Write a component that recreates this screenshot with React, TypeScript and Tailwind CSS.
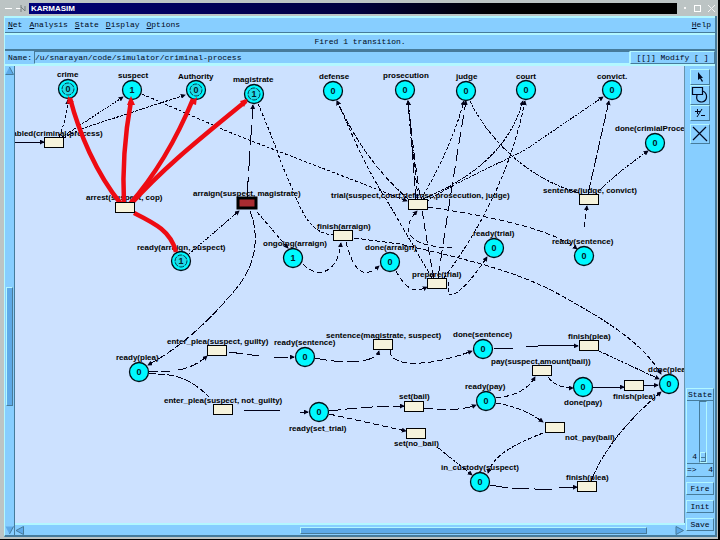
import { useState, type ReactNode } from "react";

type Place = { x: number; y: number; tokens: number; ring?: boolean };
type Edge = { d: string; dash?: string; arrow?: boolean };

const places: Place[] = [
  { x: 68, y: 89, tokens: 0, ring: true },
  { x: 132, y: 90, tokens: 1 },
  { x: 196, y: 90, tokens: 0, ring: true },
  { x: 254, y: 94, tokens: 1, ring: true },
  { x: 333, y: 91, tokens: 0 },
  { x: 405, y: 90, tokens: 0 },
  { x: 466, y: 91, tokens: 0 },
  { x: 526, y: 90, tokens: 0 },
  { x: 612, y: 90, tokens: 0 },
  { x: 655, y: 143, tokens: 0 },
  { x: 494, y: 248, tokens: 0 },
  { x: 584, y: 256, tokens: 0 },
  { x: 293, y: 258, tokens: 1 },
  { x: 390, y: 262, tokens: 0 },
  { x: 181, y: 261, tokens: 1, ring: true },
  { x: 139, y: 372, tokens: 0 },
  { x: 305, y: 357, tokens: 0 },
  { x: 483, y: 349, tokens: 0 },
  { x: 486, y: 401, tokens: 0 },
  { x: 583, y: 387, tokens: 0 },
  { x: 669, y: 384, tokens: 0 },
  { x: 319, y: 412, tokens: 0 },
  { x: 480, y: 482, tokens: 0 },
];

// top left corner of each transition box
const transitions: [number, number][] = [
  [44, 137],
  [115, 202],
  [408, 199],
  [333, 230],
  [427, 278],
  [579, 194],
  [207, 345],
  [213, 404],
  [373, 339],
  [404, 401],
  [406, 428],
  [579, 340],
  [532, 365],
  [624, 380],
  [545, 422],
  [577, 481],
];

const labels: [number, number, string][] = [
  [57, 77, "crime"],
  [118, 78, "suspect"],
  [178, 79, "Authority"],
  [233, 82, "magistrate"],
  [319, 79, "defense"],
  [383, 78, "prosecution"],
  [456, 79, "judge"],
  [516, 79, "court"],
  [597, 79, "convict."],
  [615, 131, "done(crimialProcess)"],
  [3, 136, "enabled(criminal-process)"],
  [86, 200, "arrest(suspect, cop)"],
  [193, 196, "arraign(suspect, magistrate)"],
  [331, 198, "trial(suspect,court,defense,prosecution, judge)"],
  [543, 193, "sentence(judge, convict)"],
  [473, 236, "ready(trial)"],
  [552, 244, "ready(sentence)"],
  [317, 229, "finish(arraign)"],
  [263, 246, "ongoing(arraign)"],
  [365, 250, "done(arraign)"],
  [137, 250, "ready(arraign, suspect)"],
  [412, 277, "prepare(trial)"],
  [167, 344, "enter_plea(suspect, guilty)"],
  [274, 345, "ready(sentence)"],
  [326, 338, "sentence(magistrate, suspect)"],
  [453, 337, "done(sentence)"],
  [568, 339, "finish(plea)"],
  [491, 364, "pay(suspect,amount(bail))"],
  [648, 372, "done(plea)"],
  [116, 360, "ready(plea)"],
  [164, 403, "enter_plea(suspect, not_guilty)"],
  [289, 431, "ready(set_trial)"],
  [399, 399, "set(bail)"],
  [394, 446, "set(no_bail)"],
  [465, 389, "ready(pay)"],
  [564, 405, "done(pay)"],
  [613, 399, "finish(plea)"],
  [565, 440, "not_pay(bail)"],
  [566, 480, "finish(plea)"],
  [441, 470, "in_custody(suspect)"],
];

const edges: Edge[] = [
  { d: "M15 142H44", dash: "none" },
  { d: "M59 137Q67 118 68 100", dash: "3 2" },
  { d: "M62 137L123 97", dash: "2 1" },
  { d: "M64 138Q75 131 90 126L185 95", dash: "3 1" },
  { d: "M142 94L236 135Q330 171 407 201", dash: "3 2" },
  { d: "M247 197L253 105", dash: "20 6" },
  { d: "M258 104Q271 133 282 165C299 202 305 233 333 235", dash: "3 2", arrow: false },
  { d: "M409 200C372 167 353 135 337 101", dash: "5 2" },
  { d: "M416 199L408 101", dash: "10 3" },
  { d: "M418 199L408 101", dash: "5 3" },
  { d: "M421 199Q451 149 464 101", dash: "3 2" },
  { d: "M423 199C474 177 509 149 523 101", dash: "3 1" },
  { d: "M427 201C460 179 508 160 528 148L603 97", dash: "2 1" },
  { d: "M432 278L389 204C361 160 353 135 337 101", dash: "4 2" },
  { d: "M434 278Q419 204 408 101", dash: "8 4" },
  { d: "M438 278Q451 190 466 101", dash: "12 5" },
  { d: "M444 278C475 236 510 177 525 101", dash: "4 2" },
  { d: "M470 101C491 144 532 180 579 193", dash: "3 1", arrow: false },
  { d: "M588 194L609 101", dash: "12 2" },
  { d: "M596 194Q615 174 648 151", dash: "2 1" },
  { d: "M428 207C495 217 553 230 577 249", dash: "5 3" },
  { d: "M584 227L587 206", dash: "5 3" },
  { d: "M189 254L239 211", dash: "2 1" },
  { d: "M257 212L288 248", dash: "4 2" },
  { d: "M250 211C260 237 256 266 235 290C205 326 176 350 148 365", dash: "8 2" },
  { d: "M303 264C316 278 337 276 341 243", dash: "5 3" },
  { d: "M346 242C354 273 364 279 379 266", dash: "5 3" },
  { d: "M396 271C405 287 412 294 427 287", dash: "5 3" },
  { d: "M452 248C404 246 401 229 417 211", dash: "5 3" },
  { d: "M448 282V293C453 302 475 276 487 257", dash: "4 2" },
  { d: "M354 238L400 244C451 256 520 270 567 299C615 325 645 347 661 374", dash: "5 2" },
  { d: "M149 371H170M178 370Q195 367 207 356", dash: "9 3" },
  { d: "M149 374C178 373 193 381 209 397", dash: "7 2", arrow: false },
  { d: "M229 352L259 356M274 357H294", dash: "14 4" },
  { d: "M315 358C337 363 375 365 379 351", dash: "12 4" },
  { d: "M390 350C389 368 430 367 472 351", dash: "6 3" },
  { d: "M494 348H513M526 347L551 345L578 346", dash: "none" },
  { d: "M599 351L659 379", dash: "3 1" },
  { d: "M243 410L280 411M300 412H308", dash: "none" },
  { d: "M329 411Q370 406 404 406", dash: "12 4" },
  { d: "M329 414L406 431", dash: "6 3" },
  { d: "M424 408C440 410 461 411 476 405", dash: "9 4" },
  { d: "M437 447L472 475", dash: "3 1" },
  { d: "M496 398Q525 395 535 377", dash: "5 3" },
  { d: "M496 403Q522 407 543 422", dash: "5 2" },
  { d: "M548 377Q556 388 573 388", dash: "5 2" },
  { d: "M593 387H624", dash: "none" },
  { d: "M644 386L658 385", dash: "none" },
  { d: "M543 433C520 442 493 454 488 473", dash: "4 2" },
  { d: "M490 485Q509 489 535 489H554M559 488L577 487", dash: "18 4" },
  { d: "M591 481C607 441 640 410 661 392", dash: "5 1" },
];

const firedArcs = [
  "M70 98C79 133 96 173 121 204",
  "M131 101C125 134 122 166 124 205",
  "M193 99C177 138 158 172 129 205",
  "M246 101C206 134 166 165 130 205",
  "M134 213C154 223 171 231 176 252",
];

const raised = "border border-t-[#b3f7ff] border-l-[#b3f7ff] border-b-[#467b9b] border-r-[#467b9b]";
const sunken = "border border-t-[#467b9b] border-l-[#467b9b] border-b-[#b3f7ff] border-r-[#b3f7ff]";

const menus = ["Net", "Analysis", "State", "Display", "Options"];

function NetDiagram() {
  return (
    <svg className="block h-full w-full" role="img" aria-label="Criminal process net">
      <defs>
        <marker id="arrow" viewBox="0 0 6 6" refX="5" refY="3" markerWidth="5" markerHeight="5" orient="auto">
          <path d="M0 0L6 3L0 6Z" fill="#000018" />
        </marker>
      </defs>
      {/* coordinates below are window coordinates, the canvas starts at 15,66 */}
      <g transform="translate(-15 -66)">
        <g className="fill-black font-['Liberation_Sans',sans-serif] text-[8px] font-bold">
          {labels.map(([x, y, text]) => (
            <text key={`${x}-${y}`} x={x} y={y}>
              {text}
            </text>
          ))}
        </g>
        <g fill="none" stroke="#000018" strokeWidth="1" shapeRendering="crispEdges">
          {edges.map((e) => (
            <path
              key={e.d}
              d={e.d}
              strokeDasharray={e.dash}
              markerEnd={e.arrow === false ? undefined : "url(#arrow)"}
            />
          ))}
        </g>
        {places.map((p) => (
          <g key={`${p.x}-${p.y}`}>
            <circle cx={p.x} cy={p.y} r="9.5" fill="#00f8ff" stroke="#001018" strokeWidth="1.3" />
            {p.ring && (
              <circle cx={p.x} cy={p.y} r="6" fill="#20dbe8" stroke="#003848" strokeDasharray="5 1" />
            )}
            <text
              x={p.x}
              y={p.y + 3}
              textAnchor="middle"
              className="fill-[#00202c] font-['Liberation_Sans',sans-serif] text-[9px] font-bold"
            >
              {p.tokens}
            </text>
          </g>
        ))}
        <g fill="none" stroke="#ee0b12" strokeWidth="4.5">
          {firedArcs.map((d) => (
            <path key={d} d={d} />
          ))}
        </g>
        <path d="M131 96L127 105H135ZM68 96L67 104L74 102ZM197 97L190 103L196 105ZM248 99L240 101L244 107Z" fill="#ee0b12" />
        {transitions.map(([x, y]) => (
          <rect
            key={`${x}-${y}`}
            x={x + 0.5}
            y={y + 0.5}
            width="19"
            height="10"
            fill="#f6f3dc"
            stroke="#000"
          />
        ))}
        {/* the transition that is ready to fire */}
        <rect x="238" y="198" width="18" height="10" fill="#a92c31" stroke="#000" strokeWidth="3" />
      </g>
    </svg>
  );
}

function ToolButton({ label, className, children }: { label: string; className: string; children: ReactNode }) {
  return (
    <button aria-label={label} className={`${raised} flex w-5 items-center justify-center ${className}`}>
      {children}
    </button>
  );
}

export default function App() {
  const [file, setFile] = useState("/u/snarayan/code/simulator/criminal-process");
  const [state, setState] = useState(4);

  return (
    <div className="flex h-screen flex-col overflow-hidden border-r-2 border-b border-black bg-[#bcc4c4] pt-[3px] font-['Liberation_Mono',monospace] text-[8px] leading-none text-[#000820]">
      {/* Title bar */}
      <header className="flex h-[11px] shrink-0 items-center pl-1">
        <svg width="25" height="11" fill="none" stroke="#fff">
          <path d="M1 5.5H8M12 5.5H17" />
          <path d="M17 2V9M17 4L21 8V3" stroke="#777f7f" />
        </svg>
        <h1 className="flex h-full flex-1 items-center bg-linear-to-r from-[#000078] via-[#000040] via-50% to-black to-80% pl-0.5 font-['Liberation_Sans',sans-serif] text-[8px] font-bold text-white">
          KARMASIM
        </h1>
        <svg width="41" height="11" fill="none" stroke="#f4f4f4">
          <path d="M7 5H9" strokeWidth="2" />
          <rect x="17.5" y="2.5" width="6" height="6" stroke="#fff" />
          <path d="M31 2L38 9M38 2L31 9" />
        </svg>
      </header>

      <div className="mr-px mt-0.5 mb-0.5 ml-1 flex min-h-0 flex-1 flex-col border-r-2 border-b-2 border-l border-r-[#467b9b] border-b-[#467b9b] border-l-[#b3f7ff] bg-[#87ceff]">
        {/* Menu bar */}
        <nav className="flex h-[17px] shrink-0 items-center gap-[7px] border-t-2 border-b border-t-[#b3f7ff] border-b-[#467b9b] pr-1 pl-[3px]">
          {menus.map((m) => (
            <button key={m}>
              <span className="underline">{m[0]}</span>
              {m.slice(1)}
            </button>
          ))}
          <button className="ml-auto">
            <span className="underline">H</span>elp
          </button>
        </nav>

        <p className="flex h-[17px] shrink-0 items-center justify-center border-t-2 border-b border-t-[#b3f7ff] border-b-[#467b9b]">
          Fired 1 transition.
        </p>

        {/* File name row */}
        <div className="flex h-4 shrink-0 items-center border-t border-b-2 border-t-[#467b9b] border-b-[#b3f7ff] pl-[3px]">
          <label htmlFor="net-name" className="w-[26px]">
            Name:
          </label>
          <input
            id="net-name"
            value={file}
            onChange={(e) => setFile(e.target.value)}
            className={`${sunken} h-full min-w-0 flex-1 bg-transparent p-0 outline-none`}
          />
          <button className={`${raised} h-full w-[85px] whitespace-pre`}>[[]] Modify [ ]</button>
        </div>

        <div className="flex min-h-0 flex-1">
          {/* Vertical scroll bar */}
          <div className="flex w-2.5 shrink-0 flex-col items-center border-r border-r-[#467b9b]">
            <button aria-label="Scroll up">
              <svg width="9" height="10">
                <path d="M4.5 1L8.5 8.5H0.5Z" fill="#5eaae8" />
                <path d="M4.5 1L8.5 8.5H0.5" fill="none" stroke="#467b9b" />
              </svg>
            </button>
            <div className="flex w-full flex-1 flex-col items-center">
              <div className="grow-[211]" />
              <div className={`${raised} w-[7px] grow-[118] bg-[#5eaae8]`} />
              <div className="grow-[119]" />
            </div>
            <button aria-label="Scroll down">
              <svg width="9" height="10">
                <path d="M0.5 1.5H8.5L4.5 9Z" fill="#5eaae8" />
                <path d="M8.5 1.5L4.5 9" stroke="#467b9b" />
              </svg>
            </button>
          </div>

          <main className="flex min-w-0 flex-1 flex-col">
            <div className="min-h-0 flex-1 overflow-hidden border-r border-r-[#6793ac] bg-[#cce1ff]">
              <NetDiagram />
            </div>
            {/* Horizontal scroll bar */}
            <div className="flex h-3 shrink-0 items-center border-t-2 border-t-[#b3f7ff]">
              <button aria-label="Scroll left">
                <svg width="10" height="9">
                  <path d="M1 4.5L8.5 0.5V8.5Z" fill="#5eaae8" stroke="#467b9b" />
                </svg>
              </button>
              <div className="flex flex-1 items-center">
                <div className="grow-[276]" />
                <div className={`${raised} h-[7px] grow-[347] bg-[#5eaae8]`} />
                <div className="grow-[28]" />
              </div>
              <button aria-label="Scroll right">
                <svg width="10" height="9">
                  <path d="M8.5 4.5L1 0.5V8.5Z" fill="#5eaae8" stroke="#467b9b" />
                </svg>
              </button>
            </div>
          </main>

          {/* Tools */}
          <aside className="flex w-[30px] shrink-0 flex-col items-center pt-[3px] pb-1">
            <ToolButton label="Select" className="h-4">
              <svg width="10" height="12">
                <path d="M3 1V9L5 7.5L7 11L8 10L6 7H8Z" fill="#000820" />
              </svg>
            </ToolButton>
            <ToolButton label="Draw" className="h-5">
              <svg width="18" height="18" fill="none" stroke="#000820" strokeWidth="1.2">
                <path d="M1.5 1.5H11.5V8.5H1.5Z" />
                <path d="M11.5 5C17 7 17 15 11 16C6 16 5 13 6 8.5" />
              </svg>
            </ToolButton>
            <ToolButton label="Add or remove tokens" className="h-4">
              <svg width="14" height="12" fill="none" stroke="#000820">
                <path d="M2 4.5H7M4.5 2V7M9 2L4 10M8 8.5H12" />
              </svg>
            </ToolButton>
            <ToolButton label="Delete" className="mt-[3px] h-5">
              <svg width="18" height="18" stroke="#000820" strokeWidth="1.2">
                <path d="M2 2L16 16M15 2L2 15" />
              </svg>
            </ToolButton>

            <div className={`${raised} mt-auto flex w-7 flex-col`}>
              <label htmlFor="state" className="flex h-3 items-center justify-center border-b border-b-[#467b9b]">
                State
              </label>
              <div className="flex h-[63px] border-b border-b-[#467b9b]">
                <output htmlFor="state" className="flex flex-1 items-end justify-end pr-0.5 pb-0.5">
                  {state}
                </output>
                <div className={`${sunken} relative mr-1.5 w-2`}>
                  <input
                    id="state"
                    type="range"
                    min={0}
                    max={4}
                    value={state}
                    onChange={(e) => setState(Number(e.target.value))}
                    className="absolute inset-0 h-full w-full opacity-0 [writing-mode:vertical-lr]"
                  />
                  <div className={`${raised} pointer-events-none absolute right-0 bottom-0 left-0 flex h-2.5 items-center`}>
                    <span className="h-px w-full bg-[#467b9b]" />
                  </div>
                </div>
              </div>
              <div className="flex h-3 items-center justify-between">
                <span>=&gt;</span>
                <span>{state}</span>
              </div>
            </div>
            <button className={`${raised} mt-[5px] h-[13px] w-7`}>Fire</button>
            <button className={`${raised} mt-[5px] h-[13px] w-7`}>Init</button>
            <button className={`${raised} mt-[5px] h-[13px] w-7`}>Save</button>
          </aside>
        </div>
      </div>
    </div>
  );
}
